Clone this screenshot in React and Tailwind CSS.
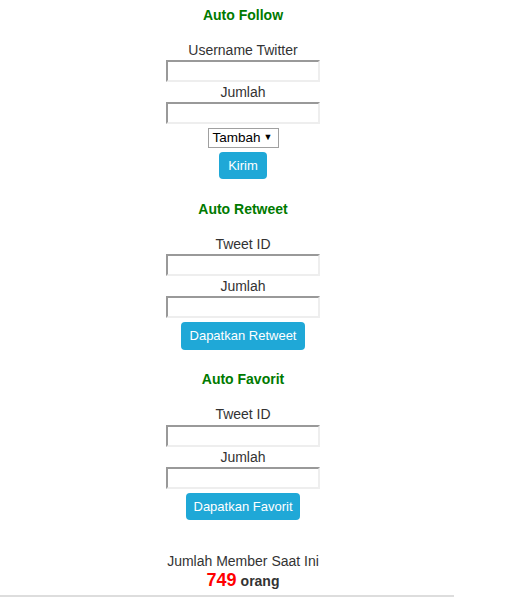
function Field({ label, className = "" }) {
  return (
    <>
      <div className={`leading-[20px] ${className}`}>{label}</div>
      <input
        type="text"
        className="mx-auto block h-[22px] w-[154px] border-2 border-t-[#999] border-l-[#999] border-b-[#eee] border-r-[#eee] bg-white outline-none"
      />
    </>
  );
}

function Button({ children, className = "" }) {
  return (
    <button
      className={`mx-auto flex h-[27px] items-center justify-center whitespace-nowrap rounded-[4px] bg-[#1fa8d7] px-0 text-[13px] text-white ${className}`}
    >
      {children}
    </button>
  );
}

function Heading({ children, className = "" }) {
  return (
    <h3 className={`text-[14px] font-bold leading-[20px] text-[#007a00] ${className}`}>
      {children}
    </h3>
  );
}

export default function App() {
  return (
    <div
      className="bg-white text-[14px] text-[#333]"
      style={{ fontFamily: '"Liberation Sans", Arial, sans-serif' }}
    >
      <div className="w-[486px] pt-[5px] text-center">
        <Heading>Auto Follow</Heading>
        <Field label="Username Twitter" className="mt-[15px]" />
        <Field label="Jumlah" />
        <div className="mx-auto mt-[4px] flex h-[20px] w-[71px] items-center justify-between border border-[#a0a0a0] pl-[4px] pr-[5px] text-[13.5px] text-black">
          <span>Tambah</span>
          <span className="text-[9px]">▼</span>
        </div>
        <Button className="mt-[4px] w-[48px]">Kirim</Button>

        <Heading className="mt-[20px]">Auto Retweet</Heading>
        <Field label="Tweet ID" className="mt-[15px]" />
        <Field label="Jumlah" />
        <Button className="mt-[4px] h-[28px] w-[124px]">Dapatkan Retweet</Button>

        <Heading className="mt-[19px]">Auto Favorit</Heading>
        <Field label="Tweet ID" className="mt-[15px] mb-[1px]" />
        <Field label="Jumlah" />
        <Button className="mt-[4px] w-[114px]">Dapatkan Favorit</Button>

        <div className="mt-[31px] leading-[20px]">Jumlah Member Saat Ini</div>
        <div className="flex items-baseline justify-center gap-[4px] font-bold leading-[19px]">
          <span className="text-[18px] text-[#ff0000]">749</span>
          <span>orang</span>
        </div>
      </div>
      <div className="mt-[4px] h-[2px] w-[454px] bg-[#ddd]" />
    </div>
  );
}
